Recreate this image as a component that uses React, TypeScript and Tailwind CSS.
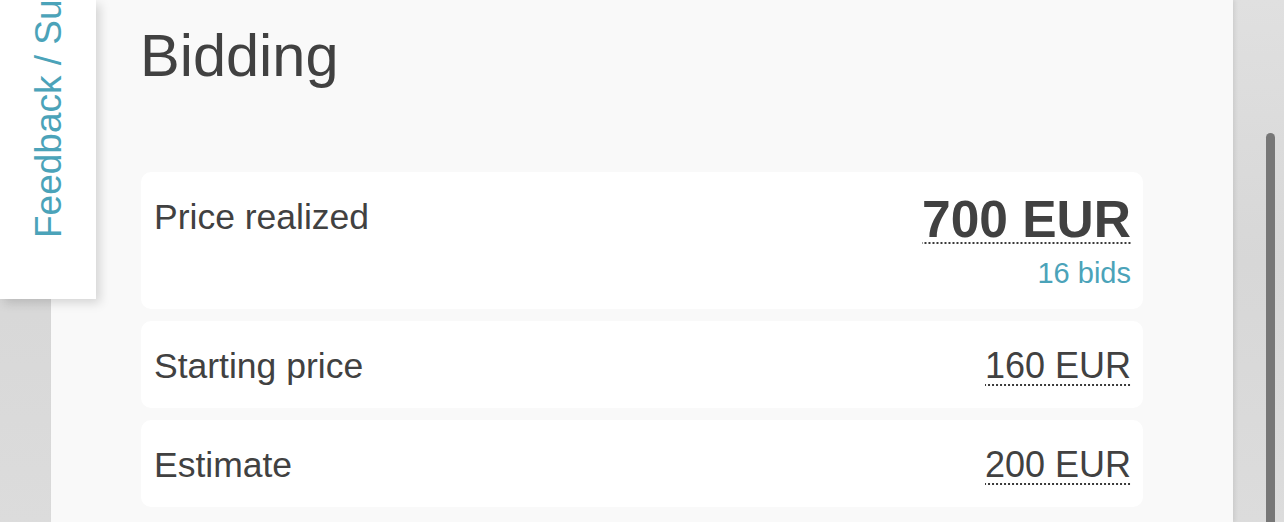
import React from 'react';

const rows = [
  { label: 'Starting price', value: '160 EUR' },
  { label: 'Estimate', value: '200 EUR' },
];

// dotted underline drawn as 2px squares with 2px gaps
const dotted =
  'bg-[linear-gradient(to_right,#3a3a3a_50%,transparent_50%)] bg-[length:4px_2px] bg-bottom bg-repeat-x pb-[2px]';

export default function App() {
  return (
    <div
      className="relative h-[522px] w-full overflow-hidden bg-[#dadada] bg-gradient-to-b from-[#e0e0e0] via-[#d7d7d7] to-[#dcdcdc] text-[#414141]"
      style={{ fontFamily: '"Liberation Sans", Arial, sans-serif' }}
    >
      <div className="ml-[51px] h-full w-[1182px] bg-[#f9f9f9] px-[90px] shadow-[2px_0_4px_rgba(0,0,0,0.08)]">
        <h1 className="-ml-[1px] pt-[26px] text-[59.5px] font-normal leading-none">Bidding</h1>

        <div className="mt-[86.5px] flex flex-col gap-3">
          <div className="flex items-start justify-between rounded-[10px] bg-white pl-[13px] pr-[12px] pt-[14px] pb-[7px]">
            <p className="text-[35.5px] leading-[62px]">Price realized</p>
            <div className="flex flex-col items-end">
              <div className={`mt-[10px] text-[51.5px] font-bold leading-[46px] ${dotted}`}>700 EUR</div>
              <div className="text-[29px] leading-[58px] text-[#4ba3b9]">16 bids</div>
            </div>
          </div>

          {rows.map(row => (
            <div
              key={row.label}
              className="flex items-start justify-between rounded-[10px] bg-white pl-[13px] pr-[12px] pt-[14px] pb-[11px]"
            >
              <p className="text-[35.5px] leading-[62px]">{row.label}</p>
              <div className={`mt-[13px] text-[36px] leading-[36px] ${dotted}`}>{row.value}</div>
            </div>
          ))}
        </div>
      </div>

      {/* feedback tab */}
      <div className="absolute left-0 top-0 h-[299px] w-[96px] bg-white shadow-[4px_4px_10px_rgba(0,0,0,0.15)]">
        <span className="absolute left-[30px] top-[238px] origin-top-left -rotate-90 whitespace-nowrap text-[37px] leading-none text-[#4ba3b9]">
          Feedback / Support
        </span>
      </div>

      {/* scrollbar */}
      <div className="absolute left-[1266px] top-[133px] h-[420px] w-[9px] rounded-full bg-[#777777]" />
    </div>
  );
}
